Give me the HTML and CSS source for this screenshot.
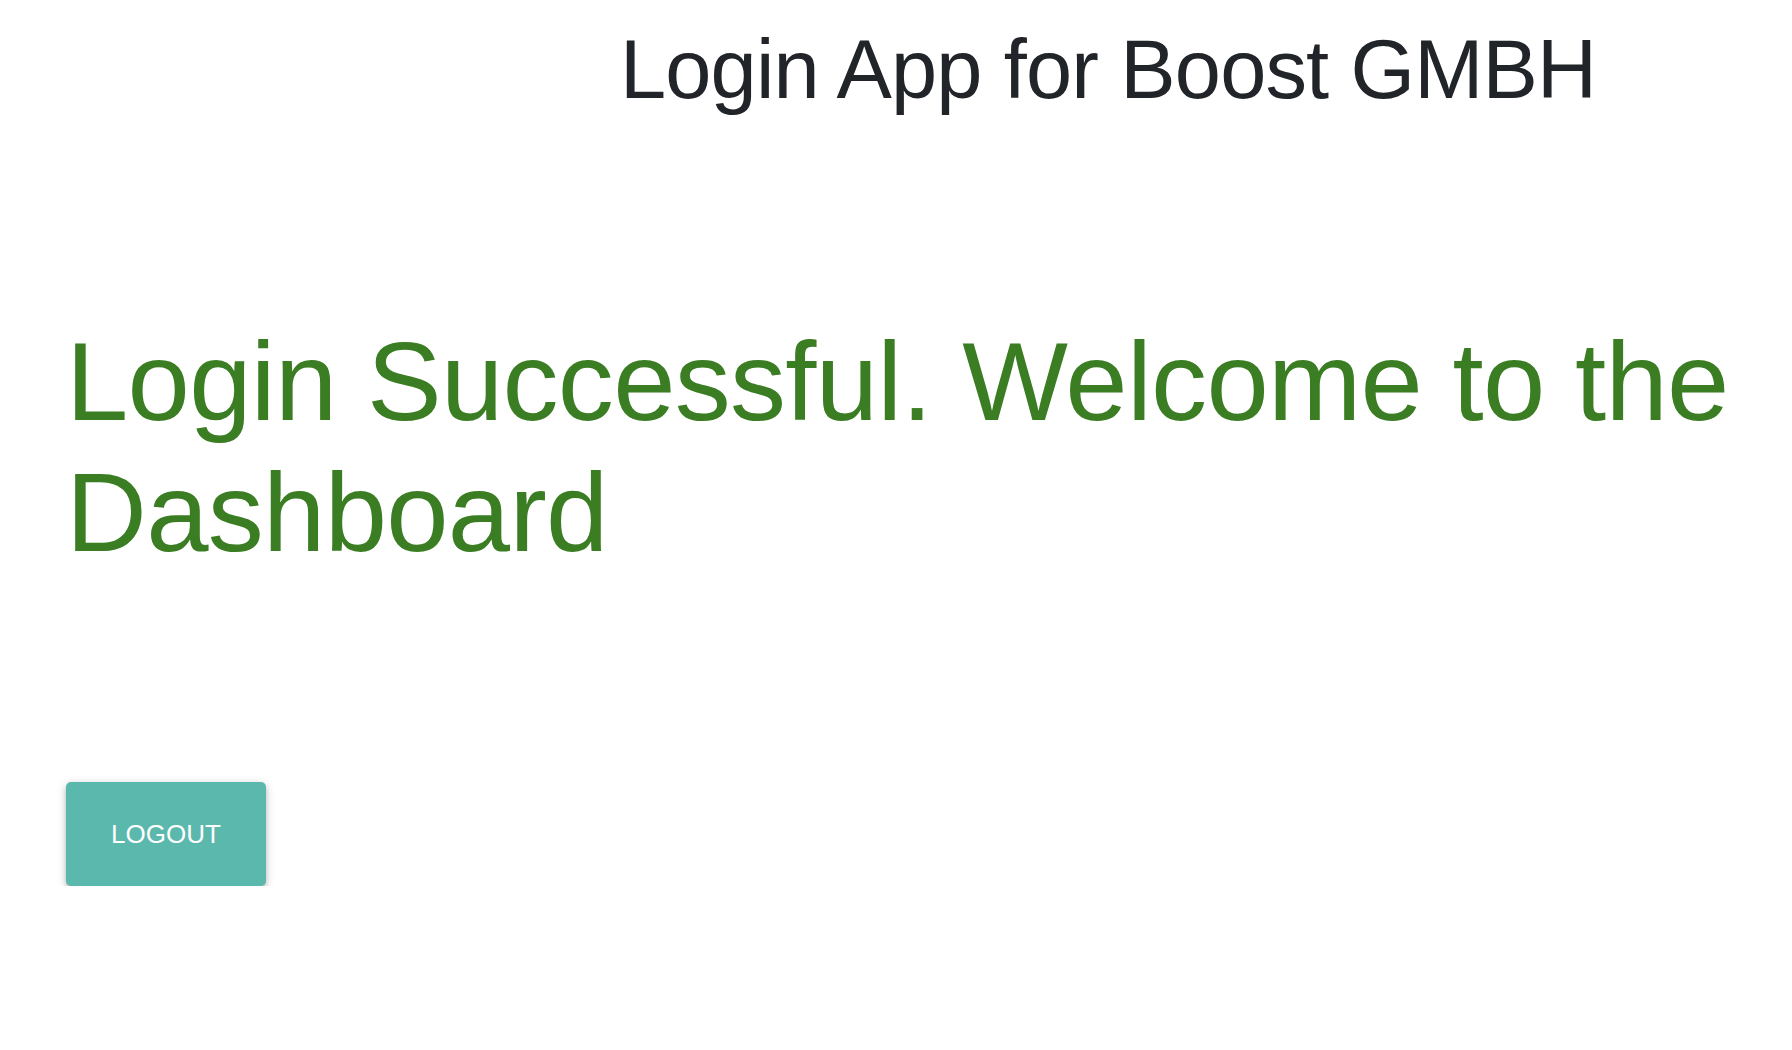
FILE: index.html
```html
<!DOCTYPE html>
<html lang="en">
<head>
<meta charset="utf-8">
<title>Login App for Boost GMBH</title>
<link rel="stylesheet" href="styles.css">
</head>
<body>
  <header class="app-header">
    <h1 class="app-title">Login App for Boost GMBH</h1>
  </header>
  <main class="dashboard">
    <h2 class="welcome">Login Successful. Welcome to the Dashboard</h2>
    <button class="btn-logout" type="button">Logout</button>
  </main>
</body>
</html>
```

FILE: styles.css
```css
html, body {
  margin: 0;
  padding: 0;
  background: #ffffff;
}

body {
  font-family: "Liberation Sans", Arial, Helvetica, sans-serif;
  color: #212529;
}

.app-header {
  padding-top: 20px;
  padding-left: 620px;
}

.app-title {
  margin: 0;
  font-size: 83px;
  line-height: 100px;
  font-weight: 400;
  letter-spacing: -0.85px;
  color: #212529;
}

.dashboard {
  padding-left: 66px;
  padding-top: 196px;
  display: flex;
  flex-direction: column;
  align-items: flex-start;
}

.welcome {
  margin: 0;
  font-size: 112px;
  line-height: 131px;
  font-weight: 400;
  letter-spacing: -0.7px;
  color: #3a7d22;
  max-width: 1720px;
}

.btn-logout {
  margin-top: 204px;
  width: 200px;
  height: 104px;
  border: none;
  border-radius: 5px;
  background: #5bb8ac;
  color: #ffffff;
  font-family: "Liberation Sans", Arial, Helvetica, sans-serif;
  font-size: 26px;
  text-transform: uppercase;
  display: flex;
  align-items: center;
  justify-content: center;
  padding: 0;
  box-shadow: 0 4px 4px 0 rgba(0,0,0,0.14), 0 6px 2px -4px rgba(0,0,0,0.12), 0 2px 10px 0 rgba(0,0,0,0.2);
  cursor: pointer;
}
```
